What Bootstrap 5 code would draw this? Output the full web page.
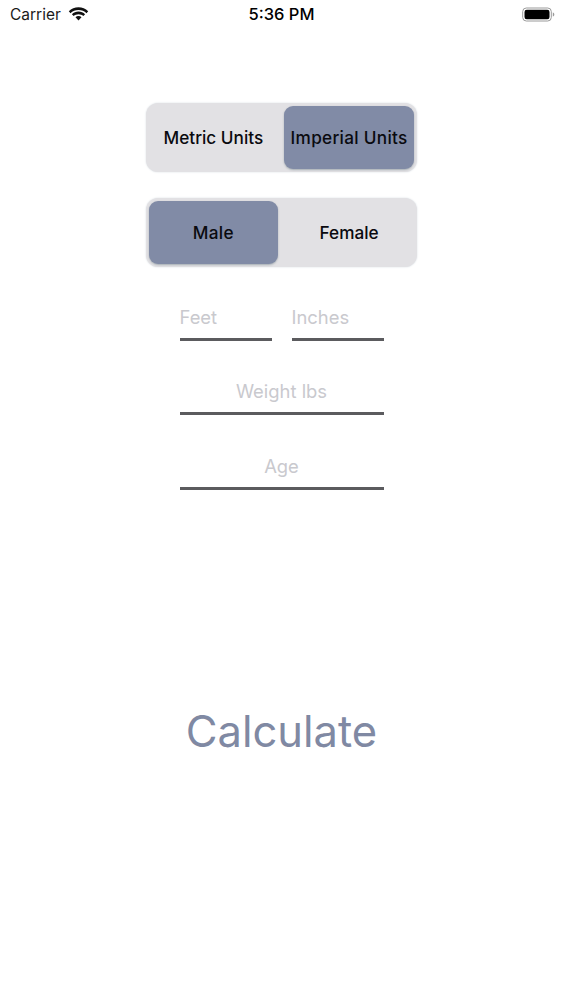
<!DOCTYPE html>
<html lang="en">
<head>
<meta charset="utf-8">
<title>Calculator</title>
<link href="https://cdn.jsdelivr.net/npm/bootstrap@5.3.0/dist/css/bootstrap.min.css" rel="stylesheet">
<style>
html,body{margin:0;background:#fff;}
body{font-family:Inter,"Liberation Sans",sans-serif;color:#000;}
.status-area{height:29px;padding:0 8px 0 10px;}
.status-left,.status-mid{line-height:29px;}
.status-left{width:178px;color:#1a1a1a;font-size:15.5px;gap:7px;}
.status-mid{font-size:16.5px;font-weight:500;}
.status-right{width:180px;}
.form-area{width:271px;margin:74px auto 0;}
.seg{height:69px;background:#e2e1e4;border-radius:12px;padding:3px 3px 3px 2.5px;gap:6px;box-shadow:0 0 2px #d5dbe0;}
.seg + .seg{margin-top:26px;}
.seg-item{flex:1 1 0;border-radius:9px;font-size:17.2px;font-weight:500;color:#0a0a0f;padding-top:1px;}
.seg-on{background:#818ba6;letter-spacing:.3px;box-shadow:0 1px 2px rgba(90,110,120,.45);}
.fields{width:204px;margin:28px auto 0;}
.line-field{height:46px;border-bottom:3px solid #5b5b5e;font-size:18.4px;line-height:45px;color:#c9c9ce;font-weight:400;}
.field-row{margin-bottom:28px;gap:20px;}
.field-wide{margin-bottom:29px;}
.field-half{flex:1 1 0;}
.calc-text{margin-top:211px;font-size:43.500px;line-height:60px;color:#8089a3;font-weight:400;}
</style>
<script src="https://cdn.jsdelivr.net/npm/bootstrap@5.3.0/dist/js/bootstrap.bundle.min.js"></script>
</head>
<body>
<div class="status-area d-flex justify-content-between align-items-center">
  <div class="status-left d-flex align-items-center">
    <span>Carrier</span>
    <svg width="21" height="15" viewBox="0 0 21 15" aria-hidden="true"><path d="M10.5 3c3.100 0 5.900 1.200 8 3.200l1.700-1.900C17.600 1.800 14.200.3 10.500.3S3.400 1.800.800 4.300l1.700 1.900C4.600 4.200 7.400 3 10.500 3z" fill="#111"/><path d="M10.500 7.200c1.900 0 3.600.700 4.900 1.900l1.700-1.900c-1.800-1.600-4.100-2.600-6.600-2.600S5.700 5.600 3.900 7.200l1.700 1.900c1.300-1.200 3-1.900 4.900-1.900z" fill="#111"/><path d="M10.500 9c-1.200 0-2.200.400-3 1.200l3 3.400 3-3.400c-.800-.800-1.800-1.200-3-1.200z" fill="#111"/></svg>
  </div>
  <div class="status-mid">5:36 PM</div>
  <div class="status-right d-flex justify-content-end">
    <svg width="33" height="15" viewBox="0 0 33 15" aria-hidden="true"><rect x=".7" y="1" width="28.600" height="13" rx="3.600" fill="none" stroke="#9a9a9a" stroke-width="1"/><rect x="2.500" y="2.800" width="25" height="9.400" rx="2.200" fill="#000"/><path d="M30.800 5.500c1 .3 1.500 1 1.500 2s-.5 1.700-1.500 2z" fill="#9a9a9a"/></svg>
  </div>
</div>
<main class="form-area">
  <div class="seg d-flex">
    <div class="seg-item d-flex align-items-center justify-content-center">Metric Units</div>
    <div class="seg-item seg-on d-flex align-items-center justify-content-center">Imperial Units</div>
  </div>
  <div class="seg d-flex">
    <div class="seg-item seg-on d-flex align-items-center justify-content-center">Male</div>
    <div class="seg-item d-flex align-items-center justify-content-center">Female</div>
  </div>
  <div class="fields">
    <div class="d-flex field-row">
      <div class="line-field field-half">Feet</div>
      <div class="line-field field-half">Inches</div>
    </div>
    <div class="line-field field-wide text-center">Weight lbs</div>
    <div class="line-field text-center">Age</div>
  </div>
  <div class="calc-text text-center">Calculate</div>
</main>
</body>
</html>
